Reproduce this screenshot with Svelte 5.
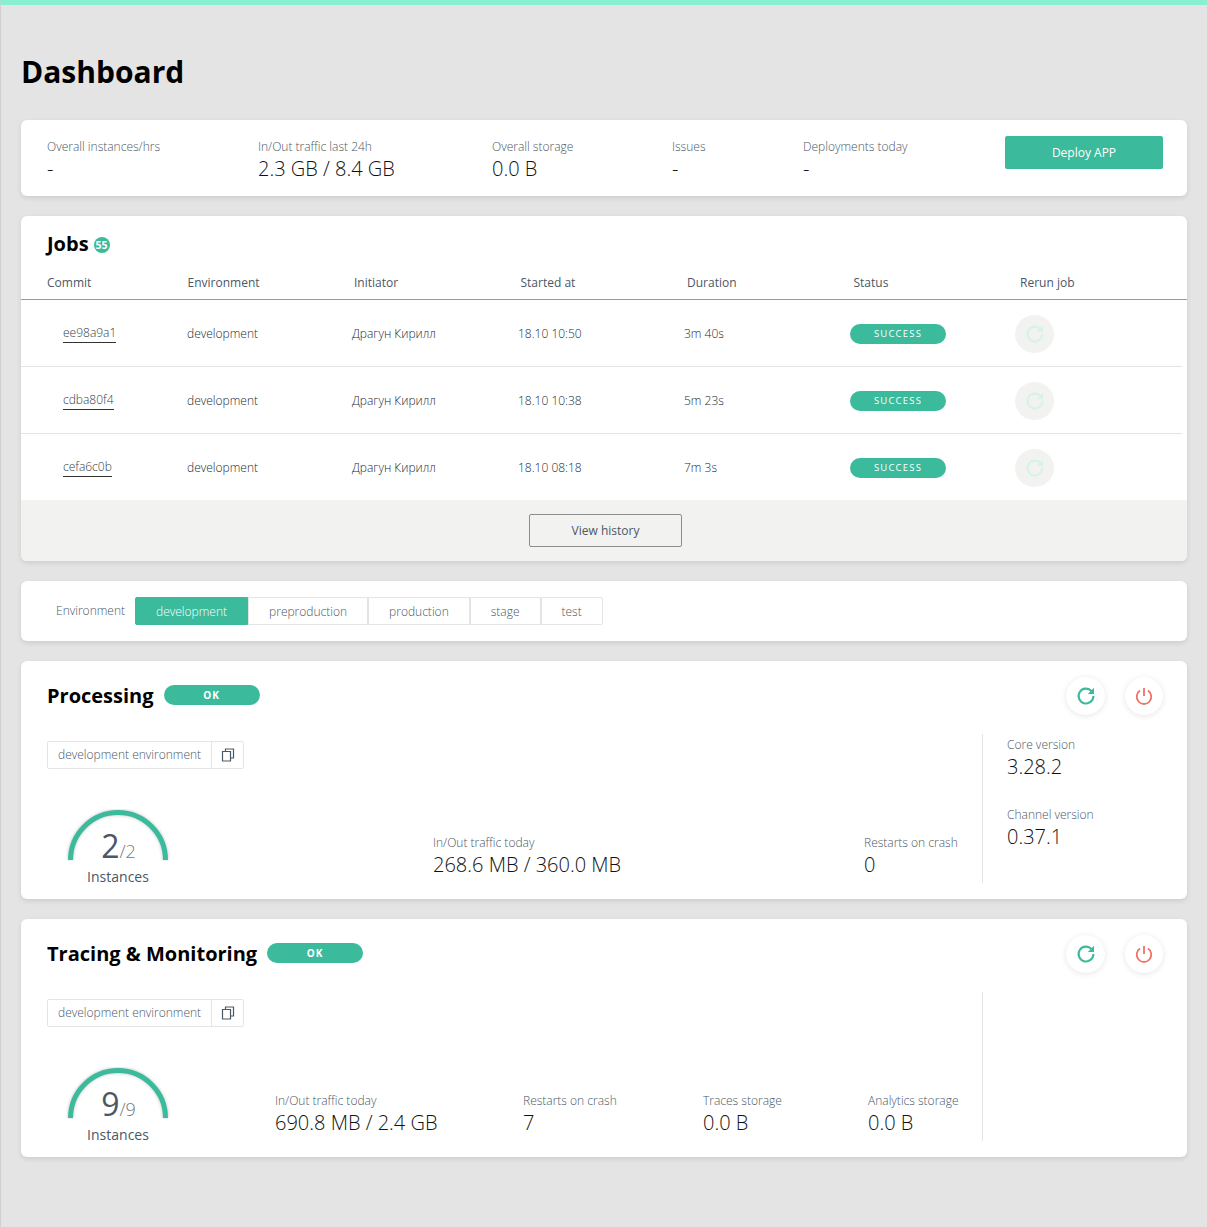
<script lang="ts">
  const stats = [
    { label: 'Overall instances/hrs', value: '-', width: 211 },
    { label: 'In/Out traffic last 24h', value: '2.3 GB / 8.4 GB', width: 234 },
    { label: 'Overall storage', value: '0.0 B', width: 180 },
    { label: 'Issues', value: '-', width: 131 },
    { label: 'Deployments today', value: '-', width: 202 },
  ];

  const jobs = [
    { commit: 'ee98a9a1', started: '18.10 10:50', duration: '3m 40s' },
    { commit: 'cdba80f4', started: '18.10 10:38', duration: '5m 23s' },
    { commit: 'cefa6c0b', started: '18.10 08:18', duration: '7m 3s' },
  ];

  const columns = ['Commit', 'Environment', 'Initiator', 'Started at', 'Duration', 'Status', 'Rerun job'];
  const envs = ['development', 'preproduction', 'production', 'stage', 'test'];
</script>

{#snippet refresh(cls)}
  <svg class={cls} viewBox="0 0 20 20" width="20" height="20" aria-hidden="true">
    <path d="M15.6 5.2A7.4 7.4 0 1 0 17.4 10" fill="none" stroke="currentColor" stroke-width="2.1" />
    <path d="M18 1.8V8h-6.2z" fill="currentColor" />
  </svg>
{/snippet}

{#snippet actions()}
  <div class="actions">
    <button class="round" aria-label="Restart">{@render refresh('green')}</button>
    <button class="round" aria-label="Stop">
      <svg class="red" viewBox="0 0 20 20" width="20" height="20" aria-hidden="true">
        <path d="M6 4.6a7.3 7.3 0 1 0 8 0" fill="none" stroke="currentColor" stroke-width="1.8" />
        <path d="M10 2v8" fill="none" stroke="currentColor" stroke-width="1.8" />
      </svg>
    </button>
  </div>
{/snippet}

{#snippet envTag()}
  <div class="env-tag">
    <span>development environment</span>
    <button aria-label="Copy">
      <svg viewBox="0 0 14 14" width="14" height="14" aria-hidden="true">
        <path d="M4.5 3.5V1h8v9H10M1.5 3.5h8v9.5h-8z" fill="none" stroke="#4a5866" stroke-width="1.2" />
      </svg>
    </button>
  </div>
{/snippet}

{#snippet gauge(current, total)}
  <div class="gauge">
    <svg viewBox="0 0 104 52" width="104" height="52" aria-hidden="true">
      <path class="arc-shadow" d="M4.500 51A47.500 47.500 0 0 1 99.500 51" />
      <path class="arc" d="M4.500 51A47.500 47.500 0 0 1 99.500 51" />
    </svg>
    <div class="count"><b>{current}</b><i>/{total}</i></div>
    <div class="gauge-label">Instances</div>
  </div>
{/snippet}

{#snippet metric(label, value)}
  <div class="metric">
    <div class="label">{label}</div>
    <div class="value">{value}</div>
  </div>
{/snippet}

<div class="page">
  <h1>Dashboard</h1>

  <section class="card summary">
    {#each stats as s}
      <div class="metric" style="width: {s.width}px">
        <div class="label">{s.label}</div>
        <div class="value">{s.value}</div>
      </div>
    {/each}
    <button class="deploy">Deploy APP</button>
  </section>

  <section class="card jobs">
    <div class="jobs-title">
      <h2>Jobs</h2>
      <span class="count-badge">55</span>
    </div>
    <div class="row head">
      {#each columns as c}
        <div>{c}</div>
      {/each}
    </div>
    {#each jobs as j}
      <div class="row job">
        <div><a href="#top" class="commit">{j.commit}</a></div>
        <div>development</div>
        <div>Драгун Кирилл</div>
        <div>{j.started}</div>
        <div>{j.duration}</div>
        <div><span class="pill success">SUCCESS</span></div>
        <div><span class="rerun">{@render refresh('faded')}</span></div>
      </div>
    {/each}
    <div class="jobs-foot">
      <button class="history">View history</button>
    </div>
  </section>

  <section class="card env-bar">
    <span class="env-label">Environment</span>
    <div class="tabs">
      {#each envs as e, i}
        <button class="tab" class:active={i === 0}>{e}</button>
      {/each}
    </div>
  </section>

  <section class="card service">
    <div class="service-main">
      <div class="service-head">
        <h2>Processing</h2>
        <span class="pill ok">OK</span>
      </div>
      {@render envTag()}
      <div class="service-stats first">
        {@render gauge(2, 2)}
        <div class="traffic">{@render metric('In/Out traffic today', '268.6 MB / 360.0 MB')}</div>
        {@render metric('Restarts on crash', '0')}
      </div>
    </div>
    <div class="side">
      {@render actions()}
      <div class="versions">
        {@render metric('Core version', '3.28.2')}
        {@render metric('Channel version', '0.37.1')}
      </div>
    </div>
  </section>

  <section class="card service">
    <div class="service-main">
      <div class="service-head">
        <h2>Tracing &amp; Monitoring</h2>
        <span class="pill ok">OK</span>
      </div>
      {@render envTag()}
      <div class="service-stats second">
        {@render gauge(9, 9)}
        {@render metric('In/Out traffic today', '690.8 MB / 2.4 GB')}
        {@render metric('Restarts on crash', '7')}
        {@render metric('Traces storage', '0.0 B')}
        {@render metric('Analytics storage', '0.0 B')}
      </div>
    </div>
    <div class="side">
      {@render actions()}
      <div class="versions"></div>
    </div>
  </section>
</div>

<style>
  :global(body) {
    margin: 0;
    background: #e4e4e4;
    font-family: 'Open Sans', sans-serif;
    color: #000;
  }

  .page {
    height: 1227px;
    box-sizing: border-box;
    border-top: 5px solid #88efd0;
    border-left: 1px solid #d0d0d0;
    padding: 0 20px 0 20px;
    overflow: hidden;
  }

  h1 {
    margin: 47px 0 28px 0;
    font-size: 30px;
    line-height: 40px;
    font-weight: 700;
  }

  h2 {
    margin: 0;
    font-size: 20px;
    line-height: 27px;
    font-weight: 700;
  }

  button {
    font-family: inherit;
    cursor: pointer;
  }

  .card {
    background: #fff;
    border-radius: 6px;
    box-shadow: 0 2px 5px rgba(0, 0, 0, 0.1);
    margin-bottom: 20px;
    width: 1166px;
  }

  .label {
    font-size: 12px;
    line-height: 16px;
    font-weight: 300;
    color: #4a5866;
  }

  .value {
    font-size: 20px;
    line-height: 27px;
    font-weight: 300;
    color: #111;
  }

  .summary {
    height: 76px;
    box-sizing: border-box;
    padding: 19px 24px 0 26px;
    display: flex;
    align-items: flex-start;
  }

  .deploy {
    width: 158px;
    height: 33px;
    margin-top: -3px;
    border: 0;
    border-radius: 2px;
    background: #3bba9c;
    color: #fff;
    font-size: 12px;
    font-weight: 400;
  }

  .jobs {
    height: 345px;
    overflow: hidden;
  }

  .jobs-title {
    display: flex;
    align-items: center;
    gap: 5px;
    padding: 14px 0 0 26px;
    height: 27px;
  }

  .count-badge {
    width: 16px;
    height: 16px;
    margin-top: 3px;
    border-radius: 50%;
    background: #3bba9c;
    color: #fff;
    font-size: 10.5px;
    line-height: 16px;
    font-weight: 700;
    text-align: center;
  }

  .row {
    display: grid;
    align-items: center;
  }

  .head {
    height: 34px;
    margin-top: 9px;
    box-sizing: border-box;
    padding-left: 26px;
    grid-template-columns: 140.500px 166.500px 166.500px 166.500px 166.500px 166.500px 1fr;
    border-bottom: 1px solid #999;
    font-size: 12px;
    color: #4a5866;
  }

  .job {
    height: 67px;
    width: 1161px;
    box-sizing: border-box;
    padding-left: 25px;
    grid-template-columns: 141px 165px 166px 166px 166px 165px 1fr;
    border-bottom: 1px solid #e4e4e4;
    font-size: 12px;
    font-weight: 300;
    color: #222c35;
  }

  .job > div {
    display: flex;
    align-items: center;
  }

  .job:nth-last-child(2) {
    height: 66px;
    border-bottom: 0;
  }

  .commit {
    margin-left: 17px;
    padding: 1px 0;
    color: #333d47;
    text-decoration: none;
    border-bottom: 1px solid #333;
  }

  .pill {
    display: inline-block;
    width: 96px;
    height: 20px;
    border-radius: 10px;
    background: #3bba9c;
    color: #fff;
    text-align: center;
    line-height: 20px;
  }

  .success {
    margin-top: 2px;
    font-size: 9.500px;
    font-weight: 400;
    letter-spacing: 1.200px;
  }

  .ok {
    font-size: 10px;
    font-weight: 700;
    letter-spacing: 1.100px;
  }

  .rerun {
    display: flex;
    align-items: center;
    justify-content: center;
    width: 39px;
    height: 38px;
    margin-top: 2px;
    border-radius: 50%;
    background: #f2f2f1;
  }

  .faded {
    color: #d6f2ea;
  }

  .green {
    color: #3bba9c;
  }

  .red {
    color: #ee7266;
  }

  .jobs-foot {
    height: 61px;
    background: #f2f2f0;
    display: flex;
    align-items: center;
    justify-content: center;
  }

  .history {
    width: 153px;
    height: 33px;
    margin-left: 3px;
    border: 1px solid #8d8d8d;
    border-radius: 2px;
    background: transparent;
    color: #4a5866;
    font-size: 12px;
  }

  .env-bar {
    height: 60px;
    box-sizing: border-box;
    padding: 16px 0 0 35px;
    display: flex;
    align-items: flex-start;
    gap: 10px;
  }

  .env-label {
    font-size: 12px;
    font-weight: 300;
    line-height: 28px;
    color: #4a5866;
  }

  .tabs {
    display: flex;
  }

  .tab {
    height: 28px;
    padding: 0 20px;
    border: 1px solid #e4e4e4;
    background: #fff;
    color: #4a5866;
    font-size: 12px;
    font-weight: 300;
  }

  .tab:last-child {
    border-radius: 0 2px 2px 0;
  }

  .tab.active {
    background: #3bba9c;
    border-color: #3bba9c;
    border-radius: 2px 0 0 2px;
    color: #fff;
  }

  .service {
    height: 238px;
    box-sizing: border-box;
    display: flex;
    padding-left: 26px;
  }

  .service-main {
    width: 936px;
    flex: none;
  }

  .service-head {
    display: flex;
    align-items: center;
    gap: 10px;
    padding-top: 21px;
    height: 27px;
  }

  .service-head .pill {
    margin-top: -1px;
  }

  .env-tag {
    display: inline-flex;
    margin-top: 32px;
    height: 28px;
    box-sizing: border-box;
    border: 1px solid #e4e4e4;
    border-radius: 2px;
    color: #4a5866;
    font-size: 12px;
    font-weight: 300;
    line-height: 26px;
  }

  .env-tag span {
    padding: 0 10px;
    border-right: 1px solid #e4e4e4;
  }

  .env-tag button {
    width: 31px;
    border: 0;
    padding: 0;
    background: none;
    display: flex;
    align-items: center;
    justify-content: center;
  }

  .service-stats {
    display: flex;
    align-items: flex-end;
    height: 87px;
    margin-top: 32px;
  }

  .service-stats .metric {
    padding-bottom: 10px;
  }

  .gauge {
    position: relative;
    width: 142px;
    flex: none;
    text-align: center;
    height: 87px;
    box-sizing: border-box;
  }

  .gauge svg {
    position: absolute;
    left: 19px;
    top: 8px;
  }

  .arc {
    fill: none;
    stroke: #3bba9c;
    stroke-width: 5px;
  }

  .arc-shadow {
    fill: none;
    stroke: rgba(0, 0, 0, 0.18);
    stroke-width: 6px;
    filter: blur(1.5px);
  }

  .count {
    position: absolute;
    left: 0;
    right: 0;
    top: 23px;
    line-height: 44px;
    padding-left: 1px;
    color: #4a5866;
  }

  .count b {
    font-size: 32px;
    font-weight: 400;
  }

  .count i {
    font-size: 18px;
    font-style: normal;
    font-weight: 300;
    color: #777;
  }

  .gauge-label {
    position: absolute;
    left: 0;
    right: 0;
    top: 66px;
    font-size: 14px;
    line-height: 19px;
    color: #4a5866;
  }

  .traffic {
    margin-left: 244px;
    width: 431px;
  }

  .second .metric:nth-child(2) {
    margin-left: 86px;
    width: 248px;
  }

  .second .metric:nth-child(3) {
    width: 180px;
  }

  .second .metric:nth-child(4) {
    width: 165px;
  }

  .side {
    flex: 1;
    min-width: 0;
    position: relative;
  }

  .actions {
    display: flex;
    justify-content: flex-end;
    gap: 20px;
    padding: 16px 24px 0 0;
  }

  .round {
    width: 39px;
    height: 38px;
    padding: 0;
    border: 0;
    border-radius: 50%;
    background: #fff;
    box-shadow: 0 1px 6px rgba(0, 0, 0, 0.1);
    display: flex;
    align-items: center;
    justify-content: center;
  }

  .round:last-child {
    width: 38px;
  }

  .versions {
    position: absolute;
    left: -1px;
    top: 73px;
    bottom: 16px;
    right: 0;
    border-left: 1px solid #e4e4e4;
    padding: 3px 0 0 24px;
    display: flex;
    flex-direction: column;
    gap: 27px;
  }
</style>
